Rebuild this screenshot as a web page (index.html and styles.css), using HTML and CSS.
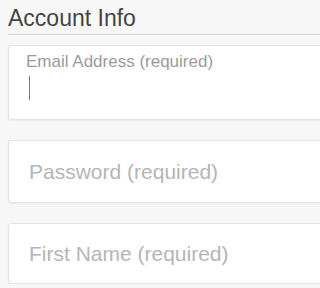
FILE: index.html
```html
<!DOCTYPE html>
<html lang="en">
<head>
<meta charset="utf-8">
<title>Account Info</title>
<link rel="stylesheet" href="styles.css">
</head>
<body>
<form class="form">
  <h2 class="heading">Account Info</h2>
  <div class="fields">
    <div class="field field-labeled">
      <label class="field-label" for="email">Email Address (required)</label>
      <div class="input-line" id="email"><span class="caret"></span></div>
    </div>
    <div class="field field-pw">
      <input class="field-input" type="password" placeholder="Password (required)">
    </div>
    <div class="field field-name">
      <input class="field-input" type="text" placeholder="First Name (required)">
    </div>
  </div>
</form>
</body>
</html>
```
FILE: styles.css
```css
html, body {
  margin: 0;
  padding: 0;
  background: #f7f7f7;
}
body {
  font-family: "Liberation Sans", Arial, sans-serif;
}
.form {
  padding: 5px 0 0 8px;
}
.heading {
  margin: 0;
  padding: 0 0 2px 0;
  font-size: 23px;
  font-weight: normal;
  line-height: normal;
  color: #444;
  border-bottom: 1px solid #d6d6d6;
  box-shadow: 0 1px 0 #fff;
}
.fields {
  margin-top: 10px;
  display: flex;
  flex-direction: column;
  gap: 20px;
}
.field {
  box-sizing: border-box;
  background: #fff;
  border: 1px solid #e3e3e3;
  border-right: none;
  border-radius: 3px 0 0 3px;
  box-shadow: 0 1px 2px rgba(0, 0, 0, 0.05);
}
.field-labeled {
  height: 75px;
  padding: 6px 0 0 17px;
}
.field-label {
  display: block;
  font-size: 17px;
  line-height: normal;
  color: #9b9b9b;
}
.input-line {
  margin-top: 4px;
  padding-left: 3px;
  height: 24px;
}
.caret {
  display: block;
  width: 1px;
  height: 24px;
  background: #7a7a7a;
}
.field-pw {
  height: 63px;
  display: flex;
  align-items: center;
  padding-left: 20px;
}
.field-name {
  height: 61px;
  display: flex;
  align-items: center;
  padding-left: 20px;
}
.field-input {
  width: 100%;
  border: none;
  outline: none;
  background: transparent;
  padding: 0;
  margin: 0;
  font-family: "Liberation Sans", Arial, sans-serif;
  font-size: 21px;
  line-height: normal;
  color: #444;
}
.field-input::placeholder {
  color: #b5b5b5;
  opacity: 1;
}
```
